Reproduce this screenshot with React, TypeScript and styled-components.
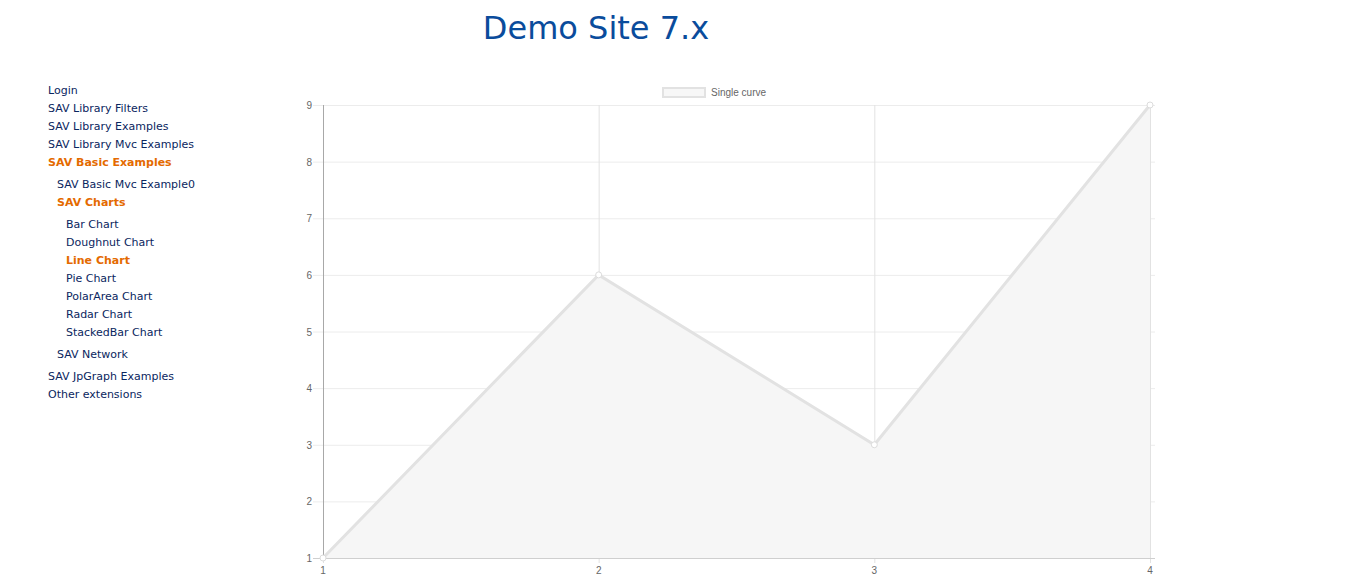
import React from 'react'
import styled, { createGlobalStyle } from 'styled-components'

const GlobalStyle = createGlobalStyle`
  body {
    margin     : 0;
    background : #ffffff;
    font-family: "DejaVu Sans", Verdana, sans-serif;
  }
`

const Header = styled.header`
  width       : 1192px;
  height      : 56px;
  line-height : 56px;
  text-align  : center;
  font-size   : 32px;
  color       : #0a4c9c;
`

const Main = styled.div`
  display : flex;
`

const Sidebar = styled.nav`
  width        : 290px;
  padding-left : 48px;
  padding-top  : 26px;
  box-sizing   : border-box;
`

const Menu = styled.ul<{ $nested?: boolean }>`
  list-style   : none;
  margin       : ${ (p) => (p.$nested ? '4px 0' : '0') };
  padding-left : ${ (p) => (p.$nested ? '9px' : '0') };
`

const Item = styled.li<{ $active?: boolean }>`
  font-size   : 11px;
  line-height : 18px;
  white-space : nowrap;
  color       : ${ (p) => (p.$active ? '#e46a00' : '#0a2660') };
  font-weight : ${ (p) => (p.$active ? 'bold' : 'normal') };
`

const ChartBox = styled.div`
  margin-top : 24px;
`

const LEFT = 33
const RIGHT = 860
const TOP = 25
const BOTTOM = 478
const xs = [1, 2, 3, 4]
const data = [1, 6, 3, 9]
const font = "'Liberation Sans', Arial, sans-serif"
const px = (i: number) => LEFT + ((RIGHT - LEFT) * i) / 3
const py = (v: number) => BOTTOM - ((BOTTOM - TOP) * (v - 1)) / 8

const LineChart = () => {
  const pts = data.map((v, i) => `${ px(i) },${ py(v) }`).join(' ')
  const area = `${ px(0) },${ BOTTOM } ${ pts } ${ px(3) },${ BOTTOM }`
  return (
    <svg width="880" height="505" style={{ display: 'block' }}>
      <rect x="373" y="8" width="42" height="9" fill="#f7f7f7" stroke="#e2e2e2" strokeWidth="2" />
      <text x="421" y="16" fontSize="10" fill="#666" fontFamily={ font }>Single curve</text>
      { [1, 2, 3, 4, 5, 6, 7, 8, 9].map((v) => (
        <g key={ v }>
          <line x1={ 23 } x2={ RIGHT + 5 } y1={ py(v) + 0.5 } y2={ py(v) + 0.5 } stroke="#ececec" />
          <text x="22" y={ py(v) + 4 } fontSize="10" fill="#666" textAnchor="end" fontFamily={ font }>{ v }</text>
        </g>
      )) }
      { xs.map((x, i) => (
        <g key={ x }>
          <line x1={ px(i) + 0.5 } x2={ px(i) + 0.5 } y1={ TOP } y2={ BOTTOM + 5 } stroke="#e2e2e2" />
          <text x={ px(i) } y="494" fontSize="10" fill="#666" textAnchor="middle" fontFamily={ font }>{ x }</text>
        </g>
      )) }
      <polygon points={ area } fill="#f6f6f6" />
      <line x1={ LEFT + 0.5 } x2={ LEFT + 0.5 } y1={ TOP } y2={ BOTTOM } stroke="#a8a8a8" />
      <line x1={ 23 } x2={ RIGHT + 5 } y1={ BOTTOM + 0.5 } y2={ BOTTOM + 0.5 } stroke="#cfcfcf" />
      <polyline points={ pts } fill="none" stroke="#e2e2e2" strokeWidth="3" />
      { data.map((v, i) => (
        <circle key={ i } cx={ px(i) } cy={ py(v) } r="3" fill="#ffffff" stroke="#dcdcdc" strokeWidth="1" />
      )) }
    </svg>
  )
}

export default function App() {
  return (
    <>
      <GlobalStyle />
      <Header>Demo Site 7.x</Header>
      <Main>
        <Sidebar>
          <Menu>
            <Item>Login</Item>
            <Item>SAV Library Filters</Item>
            <Item>SAV Library Examples</Item>
            <Item>SAV Library Mvc Examples</Item>
            <Item $active>SAV Basic Examples</Item>
            <li>
              <Menu $nested>
                <Item>SAV Basic Mvc Example0</Item>
                <Item $active>SAV Charts</Item>
                <li>
                  <Menu $nested>
                    <Item>Bar Chart</Item>
                    <Item>Doughnut Chart</Item>
                    <Item $active>Line Chart</Item>
                    <Item>Pie Chart</Item>
                    <Item>PolarArea Chart</Item>
                    <Item>Radar Chart</Item>
                    <Item>StackedBar Chart</Item>
                  </Menu>
                </li>
                <Item>SAV Network</Item>
              </Menu>
            </li>
            <Item>SAV JpGraph Examples</Item>
            <Item>Other extensions</Item>
          </Menu>
        </Sidebar>
        <ChartBox>
          <LineChart />
        </ChartBox>
      </Main>
    </>
  )
}
